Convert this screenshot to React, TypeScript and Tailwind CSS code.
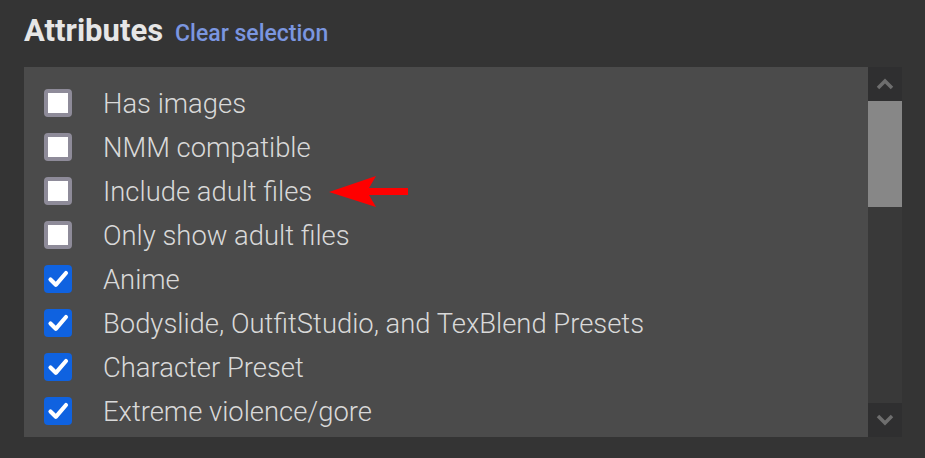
import React from 'react';

const attributes = [
  { label: 'Has images', checked: false },
  { label: 'NMM compatible', checked: false },
  { label: 'Include adult files', checked: false },
  { label: 'Only show adult files', checked: false },
  { label: 'Anime', checked: true },
  { label: 'Bodyslide, OutfitStudio, and TexBlend Presets', checked: true },
  { label: 'Character Preset', checked: true },
  { label: 'Extreme violence/gore', checked: true },
];

const Checkbox: React.FC<{ checked: boolean }> = ({ checked }) =>
  checked ? (
    <div className="w-[28px] h-[28px] rounded-[4px] bg-[#0f62e0] shrink-0">
      <svg width="28" height="28" viewBox="0 0 28 28">
        <path d="M6.5 14.5 L11.8 19.8 L22 8" fill="none" stroke="#fff" strokeWidth="4.2" strokeLinecap="round" strokeLinejoin="round" />
      </svg>
    </div>
  ) : (
    <div className="w-[28px] h-[28px] rounded-[4px] bg-white border-[4px] border-[#8e8b99] shrink-0" />
  );

const App: React.FC = () => {
  return (
    <div className="w-[925px] h-[458px] bg-[#343434] overflow-hidden" style={{ fontFamily: 'Roboto, "Liberation Sans", sans-serif' }}>
      <div className="flex items-baseline gap-[12px] pl-[24px] pt-[11px] h-[67px]">
        <h2 className="text-[31px] font-bold text-[#e6e6e6] leading-[40px]">Attributes</h2>
        <button className="text-[23px] font-medium text-[#7b96e0]">Clear selection</button>
      </div>

      <div className="relative ml-[24px] w-[878px] h-[370px] flex bg-[#4b4b4b]">
        <div className="flex-1 overflow-hidden pt-[14px] pl-[20px]">
          {attributes.map((a, i) => (
            <div key={i} className="flex items-center h-[44px]">
              <Checkbox checked={a.checked} />
              <span className="ml-[31px] pt-[3px] text-[27.4px] font-light text-[#d9d9d9] whitespace-nowrap">{a.label}</span>
            </div>
          ))}
        </div>

        <div className="w-[34px] flex flex-col bg-[#393939]">
          <div className="h-[34px] bg-[#2f2f30] flex items-center justify-center">
            <svg width="18" height="12" viewBox="0 0 18 12">
              <path d="M2 10 L9 3 L16 10" fill="none" stroke="#6e6e6e" strokeWidth="3.5" />
            </svg>
          </div>
          <div className="h-[106px] bg-[#878787]" />
          <div className="flex-1" />
          <div className="h-[34px] bg-[#2f2f30] flex items-center justify-center">
            <svg width="18" height="12" viewBox="0 0 18 12">
              <path d="M2 2 L9 9 L16 2" fill="none" stroke="#6e6e6e" strokeWidth="3.5" />
            </svg>
          </div>
        </div>

        <svg className="absolute left-[281px] top-[107px]" width="110" height="36" viewBox="305 174 110 36">
          <polygon points="329,192 376,176 369,188 408,188 408,195 369,195 376,207" fill="#ff0000" />
        </svg>
      </div>
    </div>
  );
};

export default App;
